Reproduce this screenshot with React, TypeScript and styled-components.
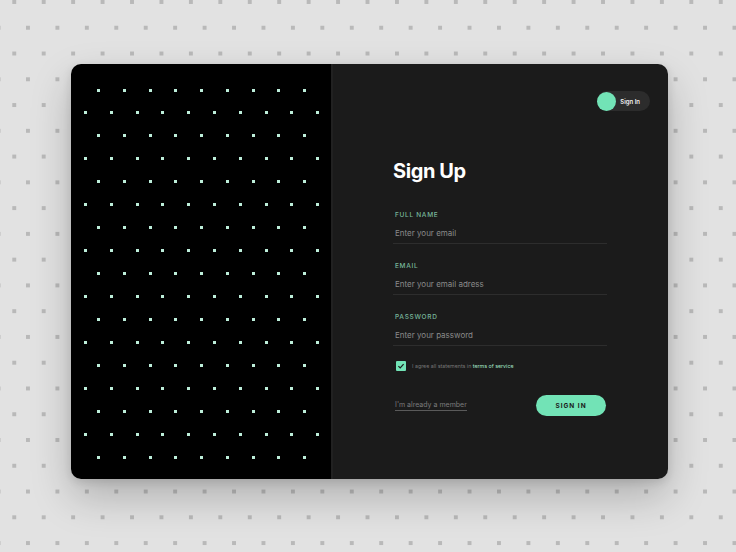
import React from 'react';
import styled, { createGlobalStyle } from 'styled-components';

const MINT = '#72e3b6';

const GlobalStyle = createGlobalStyle`
  html, body {
    margin: 0;
    padding: 0;
  }
  body {
    font-family: Inter, "Noto Sans", "Liberation Sans", sans-serif;
    background:
      conic-gradient(from 270deg at 4px 4px, #b9b9b9 90deg, transparent 0) 12.3px 0 / 29.45px 51.54px,
      conic-gradient(from 270deg at 4px 4px, #b9b9b9 90deg, transparent 0) 26px 25.77px / 29.45px 51.54px,
      #e2e2e2;
  }
`;

const fields = [
  { id: 'name', label: 'FULL NAME', placeholder: 'Enter your email', type: 'text' },
  { id: 'email', label: 'EMAIL', placeholder: 'Enter your email adress', type: 'email' },
  { id: 'password', label: 'PASSWORD', placeholder: 'Enter your password', type: 'password' },
];

// staggered grid of little mint squares on the black side
const DotPattern: React.FC = () => {
  const dots: { x: number; y: number }[] = [];
  for (let row = 0; row < 17; row++) {
    const offset = row % 2 === 0;
    const count = offset ? 9 : 10;
    const startX = offset ? 26 : 13.2;
    for (let col = 0; col < count; col++) {
      dots.push({ x: Math.round(startX + col * 25.76), y: Math.round(24.5 + row * 22.95) });
    }
  }
  return (
    <svg width="260" height="415" viewBox="0 0 260 415" shapeRendering="crispEdges">
      {dots.map((d, i) => (
        <rect key={i} x={d.x} y={d.y} width="3" height="3" fill="#bdeeda" />
      ))}
    </svg>
  );
};

const App: React.FC = () => {
  return (
    <>
      <GlobalStyle />
      <Page>
        <Card>
          <ArtPanel>
            <DotPattern />
          </ArtPanel>
          <FormPanel>
            <TopBar>
              <Toggle>
                <Knob />
                <ToggleText>Sign In</ToggleText>
              </Toggle>
            </TopBar>
            <Form>
              <Title>Sign Up</Title>
              {fields.map((f, i) => (
                <Field key={f.id} first={i === 0}>
                  <Label htmlFor={f.id}>{f.label}</Label>
                  <Input id={f.id} type={f.type} placeholder={f.placeholder} />
                </Field>
              ))}
              <AgreeRow>
                <Check>
                  <svg width="8" height="8" viewBox="0 0 8 8">
                    <path d="M1.4 4.2 L3.2 6 L6.6 2.2" stroke="#1b1b1b" strokeWidth="1.2" fill="none" />
                  </svg>
                </Check>
                <AgreeText>
                  I agree all statements in <Terms>terms of service</Terms>
                </AgreeText>
              </AgreeRow>
              <Footer>
                <MemberLink>I'm already a member</MemberLink>
                <SubmitButton>SIGN IN</SubmitButton>
              </Footer>
            </Form>
          </FormPanel>
        </Card>
      </Page>
    </>
  );
};

const Page = styled.div`
  width: 736px;
  height: 552px;
  box-sizing: border-box;
  padding: 64px 0 0 71px;
`;

const Card = styled.div`
  width: 597px;
  height: 415px;
  display: grid;
  grid-template-columns: 260px 1fr;
  border-radius: 10px;
  overflow: hidden;
  box-shadow: 0 18px 40px rgba(0, 0, 0, 0.22), 0 3px 10px rgba(0, 0, 0, 0.12);
`;

const ArtPanel = styled.div`
  background: #000;
  svg {
    display: block;
  }
`;

const FormPanel = styled.div`
  background: #1b1b1b;
  border-left: 2px solid #212121;
  display: flex;
  flex-direction: column;
  padding: 27px 18px 0 60px;
`;

const TopBar = styled.div`
  display: flex;
  justify-content: flex-end;
`;

const Toggle = styled.div`
  display: flex;
  align-items: center;
  gap: 4px;
  height: 20px;
  padding-right: 10px;
  border-radius: 10px;
  background: #2c2c2c;
`;

const Knob = styled.div`
  width: 19px;
  height: 19px;
  border-radius: 50%;
  background: ${MINT};
`;

const ToggleText = styled.span`
  font-size: 6px;
  font-weight: 600;
  color: #f0f0f0;
`;

const Form = styled.div`
  width: 214px;
  margin-top: 47px;
  display: flex;
  flex-direction: column;
`;

const Title = styled.h1`
  margin: 0;
  font-size: 20px;
  line-height: 26px;
  font-weight: 700;
  letter-spacing: -0.4px;
  color: #fff;
`;

const Field = styled.div<{ first?: boolean }>`
  display: flex;
  flex-direction: column;
  margin-top: ${(p) => (p.first ? '26px' : '17px')};
`;

const Label = styled.label`
  font-size: 6.5px;
  line-height: 10px;
  font-weight: 500;
  letter-spacing: 0.7px;
  color: #78b89c;
  padding-left: 2px;
  margin-bottom: 3px;
`;

const Input = styled.input`
  height: 21px;
  box-sizing: border-box;
  padding: 0 2px;
  background: transparent;
  border: none;
  border-bottom: 1px solid #2d2d2d;
  font-family: inherit;
  font-size: 8px;
  color: #ddd;
  outline: none;
  &::placeholder {
    color: #8a8a8a;
  }
`;

const AgreeRow = styled.div`
  display: flex;
  align-items: center;
  gap: 6px;
  margin-top: 15px;
  padding-left: 3px;
`;

const Check = styled.div`
  width: 10px;
  height: 10px;
  border-radius: 1px;
  background: ${MINT};
  display: flex;
  align-items: center;
  justify-content: center;
`;

const AgreeText = styled.span`
  font-size: 5.3px;
  color: #767676;
`;

const Terms = styled.span`
  color: #a3e6c8;
`;

const Footer = styled.div`
  display: flex;
  justify-content: space-between;
  align-items: center;
  margin-top: 24px;
  padding-right: 1px;
`;

const MemberLink = styled.span`
  margin-left: 2px;
  font-size: 7px;
  color: #7c7c7c;
  padding-bottom: 1px;
  border-bottom: 1px solid #5a5a5a;
`;

const SubmitButton = styled.button`
  width: 70px;
  height: 21px;
  border: none;
  border-radius: 11px;
  background: ${MINT};
  font-family: inherit;
  font-size: 6.5px;
  font-weight: 700;
  letter-spacing: 1px;
  color: #1a1a1a;
  cursor: pointer;
`;

export default App;
